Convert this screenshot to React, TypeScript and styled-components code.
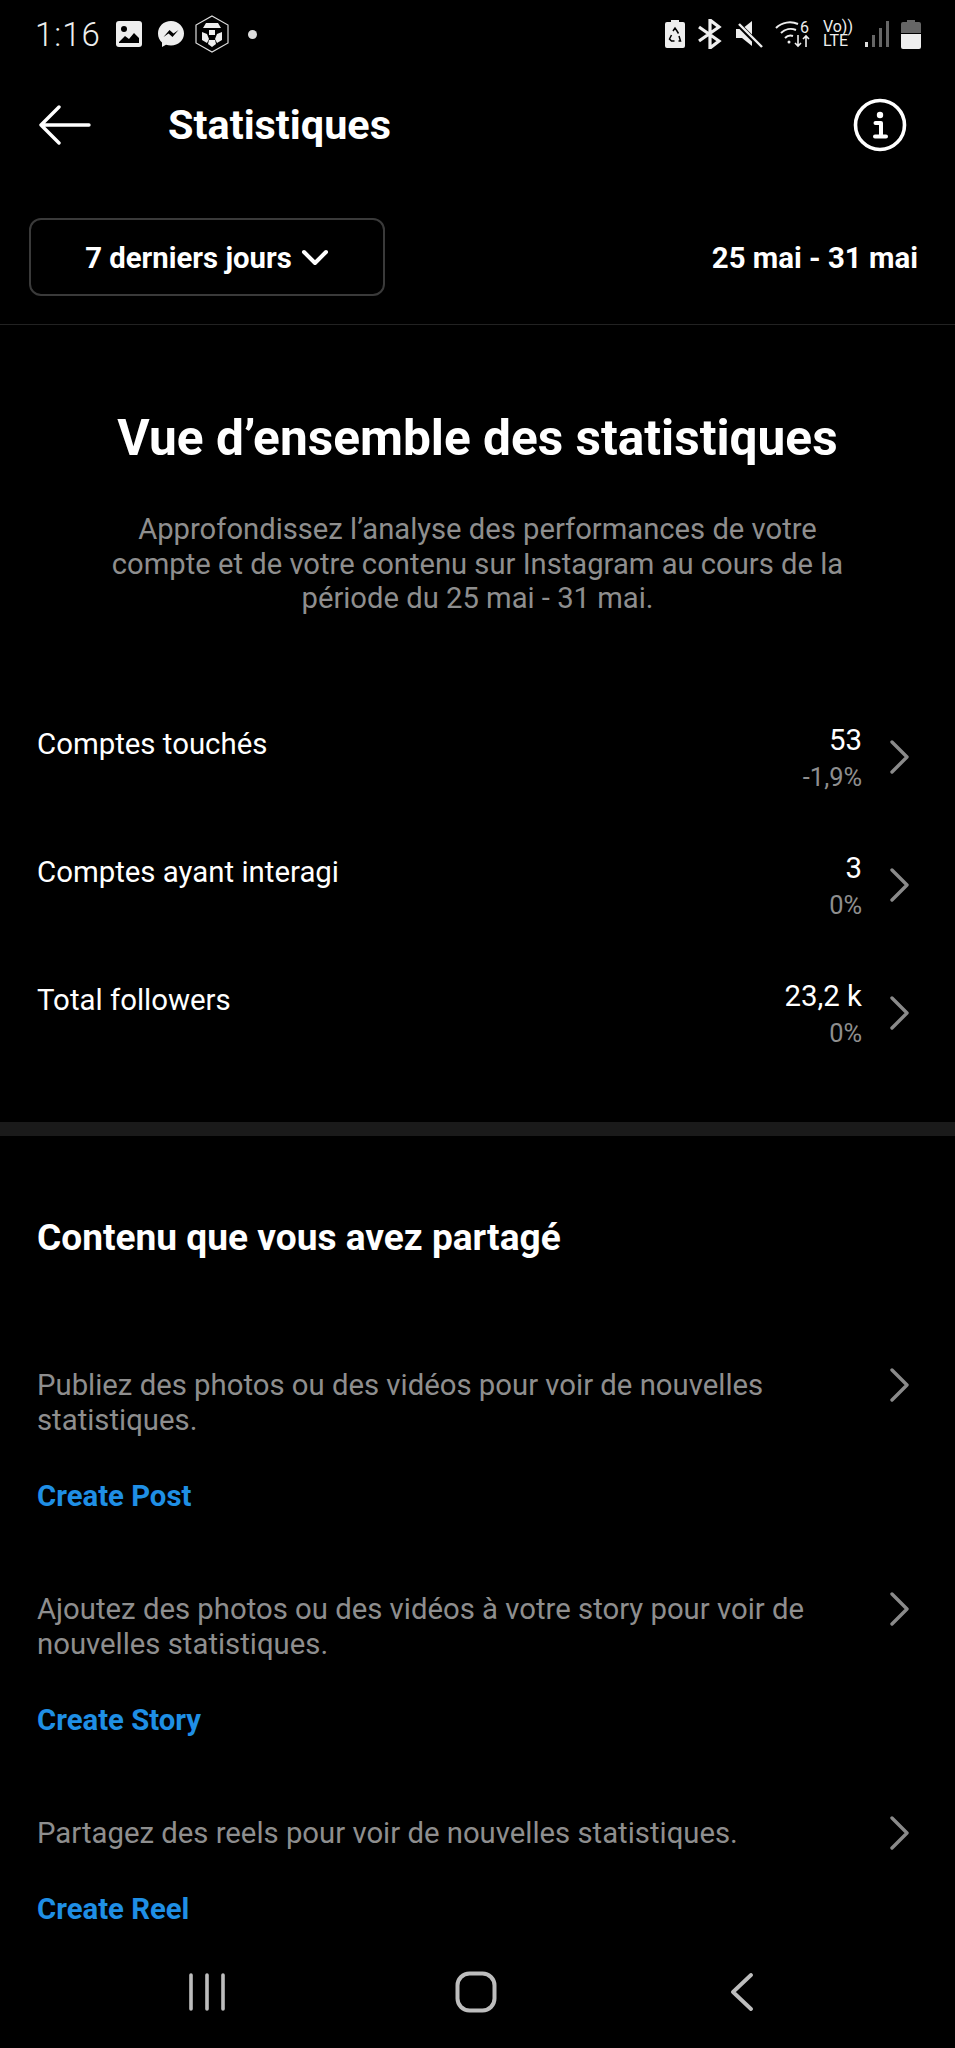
import styled, { createGlobalStyle } from "styled-components";

const metrics = [
  { label: "Comptes touchés", value: "53", delta: "-1,9%" },
  { label: "Comptes ayant interagi", value: "3", delta: "0%" },
  { label: "Total followers", value: "23,2 k", delta: "0%" },
];

const contents = [
  {
    text: "Publiez des photos ou des vidéos pour voir de nouvelles statistiques.",
    action: "Create Post",
  },
  {
    text: "Ajoutez des photos ou des vidéos à votre story pour voir de nouvelles statistiques.",
    action: "Create Story",
  },
  {
    text: "Partagez des reels pour voir de nouvelles statistiques.",
    action: "Create Reel",
  },
];

const Chevron = () => (
  <ChevronIcon viewBox="0 0 20 34" fill="none" stroke="#8a8a8a" strokeWidth="3.4" strokeLinecap="round" strokeLinejoin="round">
    <path d="M2 2l15 15L2 32" />
  </ChevronIcon>
);

export default function App() {
  return (
    <>
      <GlobalStyle />
      <Screen>
        <StatusBar>
          <StatusLeft>
            <Time>1:16</Time>
            <svg width="26" height="26" viewBox="0 0 26 26">
              <rect width="26" height="26" rx="3" fill="#eee" />
              <circle cx="8" cy="8" r="3" fill="#000" />
              <path d="M3 21l6-6 4 3 5-6 5 5v5H3z" fill="#000" />
            </svg>
            <MessengerIcon width="28" height="28" viewBox="0 0 28 28">
              <path d="M14 1C6.6 1 1 6.4 1 13.5c0 3.7 1.5 6.900 4 9.100V27l4-2.200c1.500.5 3.200.7 5 .7 7.400 0 13-5.400 13-12S21.400 1 14 1z" fill="#eee" />
              <path d="M6.500 17l6-7 4 3.500 5-3.500-6 7-4-3.500z" fill="#000" />
            </MessengerIcon>
            <CryptoIcon width="34" height="38" viewBox="0 0 34 38">
              <path d="M17 1l16 9v18l-16 9-16-9V10z" fill="none" stroke="#ddd" strokeWidth="1.200" />
              <path d="M11 8h12l3 5H8zM14 15h6v5h-6z" fill="#eee" />
              <path d="M7 17l5 2 2 5-2 4-5-3zM27 17l-5 2-2 5 2 4 5-3zM14 25h6l1 4-4 3-4-3z" fill="#eee" />
            </CryptoIcon>
            <Dot />
          </StatusLeft>
          <StatusRight>
            <svg width="20" height="28" viewBox="0 0 20 28">
              <path d="M6 0h8v2h4a2 2 0 012 2v22a2 2 0 01-2 2H2a2 2 0 01-2-2V4a2 2 0 012-2h4z" fill="#eee" />
              <path d="M8 11l2-3 2 3 1.500 2.500M6.500 15l-2 4 2 2h3M13.500 21h2l-1.500-5" stroke="#000" strokeWidth="1.500" fill="none" />
            </svg>
            <svg width="26" height="30" viewBox="0 0 26 30" fill="none" stroke="#eee" strokeWidth="3.200">
              <path d="M2 8l20 14-9 7V1l9 7L2 22" />
            </svg>
            <svg width="28" height="28" viewBox="0 0 28 28">
              <path d="M1 9h6l10-8v25l-10-8H1z" fill="#eee" />
              <path d="M2 3l24 24" stroke="#000" strokeWidth="5" />
              <path d="M4 4l23 23" stroke="#eee" strokeWidth="2.400" />
            </svg>
            <svg width="36" height="32" viewBox="0 -2 36 32" fill="none" stroke="#eee" strokeWidth="2">
              <path d="M1 8c6-6 15-7 22-4M6 13c4-4 10-5 15-3M10 18c2-2 5-3 8-2" />
              <circle cx="14" cy="22" r="1.500" fill="#eee" stroke="none" />
              <path d="M23 15v11m-3-3l3 3 3-3M31 27V16m-3 3l3-3 3 3" strokeWidth="1.600" />
              <text x="25" y="13" fill="#eee" stroke="none" fontSize="16" fontFamily="Roboto, sans-serif">6</text>
            </svg>
            <Volte>
              <span>Vo))</span>
              <span>LTE</span>
            </Volte>
            <svg width="24" height="28" viewBox="0 0 24 28" fill="#666">
              <rect x="0" y="22" width="3" height="5" fill="#ddd" />
              <rect x="7" y="15" width="3" height="12" />
              <rect x="14" y="8" width="3" height="19" />
              <rect x="21" y="1" width="3" height="26" />
            </svg>
            <svg width="20" height="29" viewBox="0 0 20 29">
              <path d="M6 0h8v2h4a2 2 0 012 2v9H0V4a2 2 0 012-2h4z" fill="#666" />
              <path d="M0 14h20v13a2 2 0 01-2 2H2a2 2 0 01-2-2z" fill="#eee" />
            </svg>
          </StatusRight>
        </StatusBar>

        <Header>
          <HeaderLeft>
            <svg width="52" height="40" viewBox="0 0 52 40" fill="none" stroke="#fff" strokeWidth="3.400" strokeLinecap="round" strokeLinejoin="round">
              <path d="M50 20H2M20 2L2 20l18 18" />
            </svg>
            <Title>Statistiques</Title>
          </HeaderLeft>
          <svg width="54" height="54" viewBox="0 0 54 54" fill="none">
            <circle cx="27" cy="27" r="24.500" stroke="#fff" strokeWidth="3.600" />
            <circle cx="27" cy="17" r="3.200" fill="#fff" />
            <path d="M22.500 25H28v13M22 38.500h11" stroke="#fff" strokeWidth="4" strokeLinecap="round" strokeLinejoin="round" />
          </svg>
        </Header>

        <FilterBar>
          <RangeButton>
            7 derniers jours
            <svg width="28" height="18" viewBox="0 0 28 18" fill="none" stroke="#fff" strokeWidth="4" strokeLinecap="round" strokeLinejoin="round">
              <path d="M3 3l11 11L25 3" />
            </svg>
          </RangeButton>
          <DateRange>25 mai - 31 mai</DateRange>
        </FilterBar>

        <Overview>
          <OverviewTitle>Vue d’ensemble des statistiques</OverviewTitle>
          <OverviewText>
            Approfondissez l’analyse des performances de votre
            <br />
            compte et de votre contenu sur Instagram au cours de la
            <br />
            période du 25 mai - 31 mai.
          </OverviewText>
        </Overview>

        <MetricList>
          {metrics.map((metric) => (
            <MetricRow key={metric.label}>
              <MetricLabel>{metric.label}</MetricLabel>
              <MetricValues>
                <MetricValue>{metric.value}</MetricValue>
                <MetricDelta>{metric.delta}</MetricDelta>
              </MetricValues>
              <Chevron />
            </MetricRow>
          ))}
        </MetricList>

        <SectionDivider />

        <ContentSection>
          <SectionTitle>Contenu que vous avez partagé</SectionTitle>
          {contents.map((content) => (
            <ContentItem key={content.action}>
              <ContentRow>
                <ContentText>{content.text}</ContentText>
                <Chevron />
              </ContentRow>
              <ActionLink>{content.action}</ActionLink>
            </ContentItem>
          ))}
        </ContentSection>

        <NavBar>
          <svg width="38" height="38" viewBox="0 0 38 38" stroke="#bdbdbd" strokeWidth="3.600" strokeLinecap="round">
            <path d="M3 2v34M19 2v34M35 2v34" />
          </svg>
          <svg width="42" height="42" viewBox="0 0 42 42" fill="none" stroke="#bdbdbd" strokeWidth="4">
            <rect x="2.500" y="2.500" width="37" height="37" rx="12" />
          </svg>
          <svg width="29" height="38" viewBox="-5 0 29 38" fill="none" stroke="#bdbdbd" strokeWidth="3.800" strokeLinecap="round" strokeLinejoin="round">
            <path d="M21 2L3 19l18 17" />
          </svg>
        </NavBar>
      </Screen>
    </>
  );
}

const GlobalStyle = createGlobalStyle`
  html, body {
    margin: 0;
    background: #000;
  }
  body {
    font-family: Roboto, "Liberation Sans", sans-serif;
    color: #fff;
  }
`;

const Screen = styled.div`
  width: 955px;
  height: 2048px;
  background: #000;
  overflow: hidden;
  display: flex;
  flex-direction: column;
`;

const StatusBar = styled.div`
  height: 68px;
  padding: 0 34px 0 35px;
  display: flex;
  justify-content: space-between;
  align-items: center;
  box-sizing: border-box;
`;

const StatusLeft = styled.div`
  display: flex;
  align-items: center;
  gap: 13px;
`;

const Time = styled.span`
  font-size: 33px;
  font-weight: 300;
  color: #eee;
  letter-spacing: 1px;
  margin-right: 2px;
`;

const MessengerIcon = styled.svg`
  margin-left: 2px;
`;

const CryptoIcon = styled.svg`
  margin-left: -3px;
`;

const Dot = styled.span`
  width: 9px;
  height: 9px;
  margin-left: 6px;
  border-radius: 50%;
  background: #ddd;
`;

const StatusRight = styled.div`
  display: flex;
  align-items: center;
  gap: 12px;
`;

const Volte = styled.div`
  display: flex;
  flex-direction: column;
  font-size: 16px;
  line-height: 14px;
  color: #eee;
`;

const Header = styled.div`
  height: 110px;
  padding: 3px 48px 0 39px;
  display: flex;
  justify-content: space-between;
  align-items: center;
  box-sizing: border-box;
`;

const HeaderLeft = styled.div`
  display: flex;
  align-items: center;
  gap: 77px;
`;

const Title = styled.h1`
  margin: 0;
  font-size: 41.4px;
  font-weight: 700;
  line-height: 46px;
`;

const FilterBar = styled.div`
  height: 147px;
  padding: 40px 37px 29px 29px;
  display: flex;
  justify-content: space-between;
  align-items: center;
  box-sizing: border-box;
  border-bottom: 1px solid #222;
`;

const RangeButton = styled.div`
  width: 356px;
  height: 78px;
  padding-top: 3px;
  display: flex;
  justify-content: center;
  align-items: center;
  gap: 9px;
  box-sizing: border-box;
  border: 2px solid #3a3a3a;
  border-radius: 12px;
  font-size: 29.3px;
  font-weight: 700;
`;

const DateRange = styled.span`
  padding-top: 3px;
  font-size: 29.4px;
  font-weight: 700;
`;

const Overview = styled.div`
  padding: 85px 30px 0;
  text-align: center;
`;

const OverviewTitle = styled.h2`
  margin: 0;
  font-size: 49.6px;
  font-weight: 700;
  line-height: 56px;
`;

const OverviewText = styled.p`
  margin: 46px 0 0;
  font-size: 29.2px;
  line-height: 34.6px;
  color: #8e8e8e;
`;

const MetricList = styled.div`
  margin-top: 91px;
  padding: 0 45px 0 37px;
  display: flex;
  flex-direction: column;
  gap: 28px;
`;

const MetricRow = styled.div`
  height: 100px;
  display: flex;
  align-items: center;
  gap: 28px;
`;

const MetricLabel = styled.span`
  flex: 1;
  font-size: 29.4px;
  line-height: 34px;
  margin-bottom: 26px;
`;

const MetricValues = styled.div`
  margin-top: 6px;
  display: flex;
  flex-direction: column;
  align-items: flex-end;
`;

const MetricValue = styled.span`
  font-size: 29.4px;
  line-height: 34px;
`;

const MetricDelta = styled.span`
  font-size: 25.4px;
  line-height: 40px;
  color: #8e8e8e;
`;

const ChevronIcon = styled.svg`
  flex: none;
  width: 20px;
  height: 34px;
`;

const SectionDivider = styled.div`
  height: 14px;
  margin-top: 59px;
  background: #1a1a1a;
`;

const ContentSection = styled.div`
  flex: 1;
  min-height: 0;
  padding: 80px 45px 0 37px;
`;

const SectionTitle = styled.h3`
  margin: 0 0 108px;
  font-size: 37.1px;
  font-weight: 700;
  line-height: 44px;
`;

const ContentItem = styled.div`
  margin-bottom: 79px;

  &:last-child {
    margin-bottom: 0;
  }
`;

const ContentRow = styled.div`
  display: flex;
  justify-content: space-between;
  align-items: flex-start;
  gap: 61px;
`;

const ContentText = styled.p`
  margin: 0;
  font-size: 29.3px;
  line-height: 35px;
  color: #8e8e8e;
`;

const ActionLink = styled.div`
  margin-top: 41px;
  font-size: 29.3px;
  font-weight: 700;
  line-height: 34px;
  color: #1f8fe5;
`;

const NavBar = styled.div`
  height: 112px;
  flex: none;
  padding: 0 201px 0 188px;
  display: flex;
  justify-content: space-between;
  align-items: center;
  box-sizing: border-box;
  background: #000;
`;
